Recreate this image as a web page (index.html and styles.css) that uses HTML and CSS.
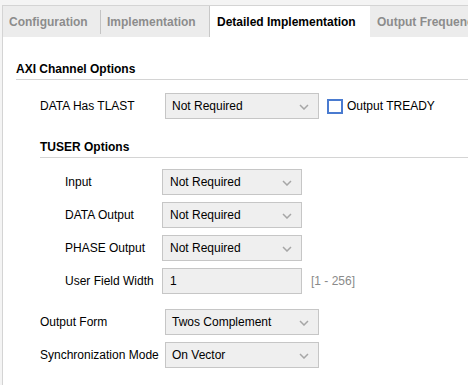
FILE: index.html
```html
<!DOCTYPE html>
<html lang="en">
<head>
    <meta charset="UTF-8">
    <meta name="viewport" content="width=device-width, initial-scale=1.0">
    <title>Detailed Implementation</title>
    <link rel="stylesheet" href="styles.css">
</head>
<body>

    <div class="panel">

        <!-- Tabs -->
        <div class="tabs">
            <div class="tab tab-config">Configuration</div>
            <span class="tab-divider"></span>
            <div class="tab tab-impl">Implementation</div>
            <div class="tab tab-detail active">Detailed Implementation</div>
            <div class="tab tab-output">Output Frequencies</div>
        </div>

        <div class="content">

            <!-- AXI Channel Options -->
            <div class="section-title">AXI Channel Options</div>
            <div class="rows rows-top">
                <div class="row">
                    <span class="label">DATA Has TLAST</span>
                    <div class="select wide">
                        <span>Not Required</span>
                        <svg class="chevron" width="10" height="6" viewBox="0 0 10 6"><path d="M1 1 L5 5 L9 1" fill="none" stroke="#a6a6a6" stroke-width="1.5"/></svg>
                    </div>
                    <div class="check">
                        <span class="check-box"></span>
                        <span>Output TREADY</span>
                    </div>
                </div>
            </div>

            <!-- TUSER Options -->
            <div class="subsection">
                <div class="section-title">TUSER Options</div>
                <div class="rows rows-sub">
                    <div class="row">
                        <span class="label">Input</span>
                        <div class="select narrow">
                            <span>Not Required</span>
                            <svg class="chevron" width="10" height="6" viewBox="0 0 10 6"><path d="M1 1 L5 5 L9 1" fill="none" stroke="#a6a6a6" stroke-width="1.5"/></svg>
                        </div>
                    </div>
                    <div class="row">
                        <span class="label">DATA Output</span>
                        <div class="select narrow">
                            <span>Not Required</span>
                            <svg class="chevron" width="10" height="6" viewBox="0 0 10 6"><path d="M1 1 L5 5 L9 1" fill="none" stroke="#a6a6a6" stroke-width="1.5"/></svg>
                        </div>
                    </div>
                    <div class="row">
                        <span class="label">PHASE Output</span>
                        <div class="select narrow">
                            <span>Not Required</span>
                            <svg class="chevron" width="10" height="6" viewBox="0 0 10 6"><path d="M1 1 L5 5 L9 1" fill="none" stroke="#a6a6a6" stroke-width="1.5"/></svg>
                        </div>
                    </div>
                    <div class="row">
                        <span class="label">User Field Width</span>
                        <div class="select narrow">
                            <span>1</span>
                        </div>
                        <span class="range">[1 - 256]</span>
                    </div>
                </div>
            </div>

            <!-- Output -->
            <div class="rows rows-bottom">
                <div class="row">
                    <span class="label">Output Form</span>
                    <div class="select wide">
                        <span>Twos Complement</span>
                        <svg class="chevron" width="10" height="6" viewBox="0 0 10 6"><path d="M1 1 L5 5 L9 1" fill="none" stroke="#a6a6a6" stroke-width="1.5"/></svg>
                    </div>
                </div>
                <div class="row">
                    <span class="label">Synchronization Mode</span>
                    <div class="select wide">
                        <span>On Vector</span>
                        <svg class="chevron" width="10" height="6" viewBox="0 0 10 6"><path d="M1 1 L5 5 L9 1" fill="none" stroke="#a6a6a6" stroke-width="1.5"/></svg>
                    </div>
                </div>
            </div>

        </div>
    </div>

</body>
</html>
```

FILE: styles.css
```css
body {
    font-family: "Liberation Sans", Arial, sans-serif;
    font-size: 12px;
    color: #000;
    background-color: #f4f4f4;
    margin: 0;
    height: 385px;
    overflow: hidden;
}

.panel {
    margin: 5px 0 0 2px;
    height: 380px;
    background-color: #fff;
    border-top: 1px solid #d4d4d4;
    border-left: 1px solid #d4d4d4;
}

/* Tabs */
.tabs {
    display: flex;
    align-items: stretch;
    height: 31px;
    background-color: #ececec;
    overflow: hidden;
    white-space: nowrap;
}

.tab {
    display: flex;
    align-items: center;
    box-sizing: border-box;
    padding-left: 6px;
    font-weight: bold;
    color: #8c8c8c;
    flex-shrink: 0;
    overflow: hidden;
}

.tab-config {
    width: 97px;
}

.tab-impl {
    width: 108px;
}

.tab-detail {
    width: 161px;
    padding-left: 7px;
}

.tab-output {
    flex: 1;
    padding-left: 7px;
}

.tab.active {
    background-color: #fff;
    color: #000;
    border-left: 1px solid #c8c8c8;
}

.tab-divider {
    align-self: center;
    width: 1px;
    height: 24px;
    background-color: #c4c4c4;
    flex-shrink: 0;
}

/* Content */
.content {
    padding-top: 24px;
    padding-left: 13px;
}

.section-title {
    font-weight: bold;
    line-height: 16px;
    padding-bottom: 2px;
    border-bottom: 1px solid #d4d4d4;
}

.rows {
    display: flex;
    flex-direction: column;
    gap: 7px;
}

.row {
    display: flex;
    align-items: center;
    height: 26px;
}

.label {
    flex-shrink: 0;
    white-space: nowrap;
}

.rows-top {
    margin-top: 13px;
    padding-left: 24px;
}

.rows-top .label,
.rows-bottom .label {
    width: 125px;
}

.subsection {
    margin-top: 20px;
    margin-left: 24px;
}

.rows-sub {
    margin-top: 11px;
    padding-left: 25px;
}

.rows-sub .label {
    width: 97px;
}

.rows-bottom {
    margin-top: 15px;
    padding-left: 24px;
}

/* Dropdowns */
.select {
    display: flex;
    align-items: center;
    justify-content: space-between;
    box-sizing: border-box;
    height: 26px;
    padding: 0 9px 0 6px;
    background-color: #efefef;
    border: 1px solid #c6c6c6;
}

.select.wide {
    width: 154px;
}

.select.narrow {
    width: 140px;
    padding-left: 7px;
}

.chevron {
    margin-top: 1px;
}

.check {
    display: flex;
    align-items: center;
    margin-left: 8px;
    gap: 4px;
}

.check-box {
    box-sizing: border-box;
    width: 16px;
    height: 15px;
    border: 2px solid #4a7bd0;
    background-color: #fff;
}

.range {
    margin-left: 9px;
    color: #8a8a8a;
}
```
